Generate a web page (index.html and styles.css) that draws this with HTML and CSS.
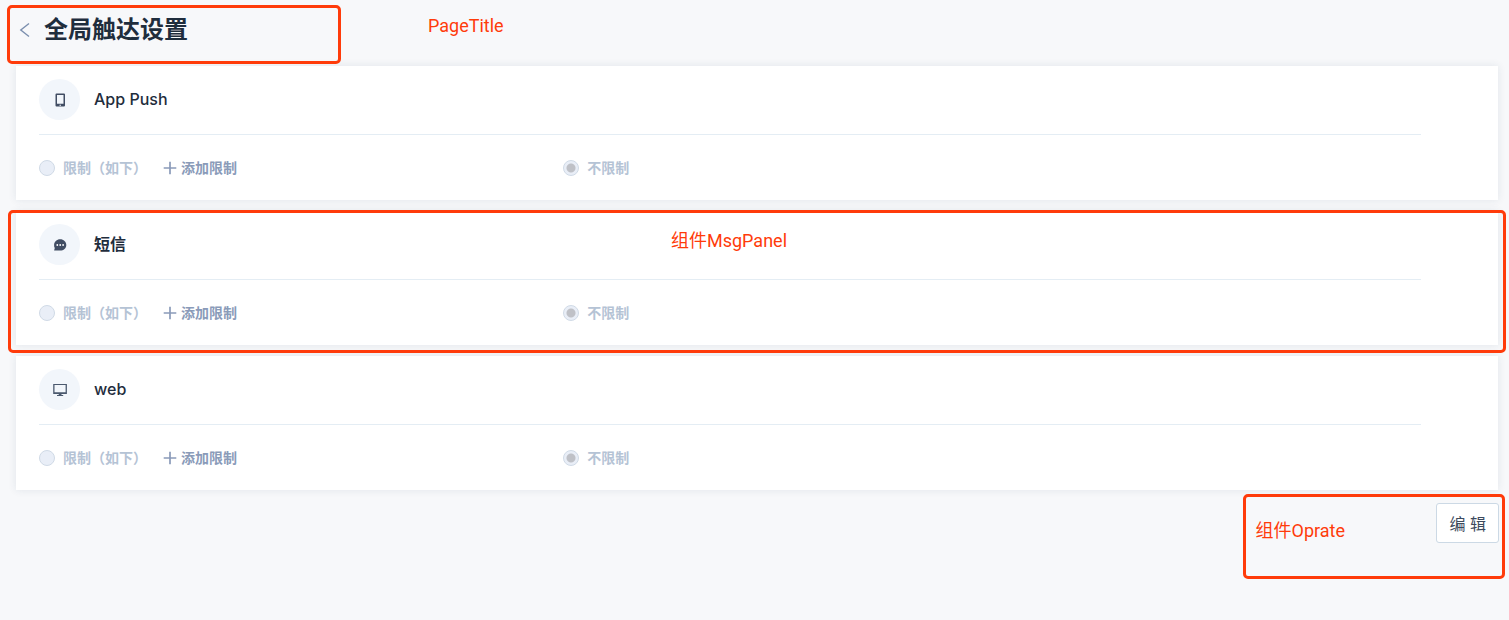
FILE: index.html
```html
<!DOCTYPE html>
<html lang="zh-CN">
<head>
<meta charset="utf-8">
<title>全局触达设置</title>
<link rel="stylesheet" href="styles.css">
</head>
<body>
<header class="page-title">
  <button class="back" type="button" aria-label="返回">
    <svg width="12" height="16" viewBox="0 0 12 16" fill="none" stroke="#7b8fae" stroke-width="1.4"><path d="M11 1.500 2.800 8l8.200 6.500"/></svg>
  </button>
  <h1>全局触达设置</h1>
  <div class="frame frame-title"></div>
  <span class="note note-title">PageTitle</span>
</header>
<main class="panels">
  <section class="panel">
    <div class="panel-head">
      <span class="badge"><svg width="12" height="14" viewBox="0 0 12 14"><path fill="#414d63" fill-rule="evenodd" d="M2.500.5h7.500A1 1 0 0 1 11 1.500v11a1 1 0 0 1-1 1h-7.500a1 1 0 0 1-1-1v-11a1 1 0 0 1 1-1zM3 2v8.800h6.500V2zM5.500 11.700v1h1.500v-1z"/></svg></span>
      <h2>App Push</h2>
    </div>
    <div class="options">
      <div class="option">
        <label class="choice"><input type="radio" name="push" disabled>限制（如下）</label>
        <button class="add" type="button"><svg width="14" height="14" viewBox="0 0 14 14" stroke="#8a9bb9" stroke-width="1.700"><path d="M7 .7v12.600M.7 7h12.600"/></svg>添加限制</button>
      </div>
      <div class="option"><label class="choice"><input type="radio" name="push" checked disabled>不限制</label></div>
    </div>
  </section>
  <section class="panel">
    <div class="panel-head">
      <span class="badge"><svg width="14" height="14" viewBox="0 0 14 14"><path fill="#414d63" d="M7.200 1.200c3.400 0 6.100 2.500 6.100 5.700s-2.700 5.700-6.100 5.700H1.100l.7-2.500A5.400 5.400 0 0 1 1.100 6.900c0-3.200 2.700-5.700 6.100-5.700z"/><g fill="#fff"><circle cx="4.300" cy="7" r=".9"/><circle cx="7.200" cy="7" r=".9"/><circle cx="10.100" cy="7" r=".9"/></g></svg></span>
      <h2 class="cjk">短信</h2>
    </div>
    <div class="options">
      <div class="option">
        <label class="choice"><input type="radio" name="sms" disabled>限制（如下）</label>
        <button class="add" type="button"><svg width="14" height="14" viewBox="0 0 14 14" stroke="#8a9bb9" stroke-width="1.700"><path d="M7 .7v12.600M.7 7h12.600"/></svg>添加限制</button>
      </div>
      <div class="option"><label class="choice"><input type="radio" name="sms" checked disabled>不限制</label></div>
    </div>
    <div class="frame frame-panel"></div>
    <span class="note note-panel">组件MsgPanel</span>
  </section>
  <section class="panel">
    <div class="panel-head">
      <span class="badge"><svg width="14" height="14" viewBox="0 0 14 14"><path fill="#4b596e" fill-rule="evenodd" d="M.2 1h13.700v10H8.500v1.100h1.700V13H4v-.9h1.700V11H.2zM1.500 2v7.300h11.100V2z"/></svg></span>
      <h2>web</h2>
    </div>
    <div class="options">
      <div class="option">
        <label class="choice"><input type="radio" name="web" disabled>限制（如下）</label>
        <button class="add" type="button"><svg width="14" height="14" viewBox="0 0 14 14" stroke="#8a9bb9" stroke-width="1.700"><path d="M7 .7v12.600M.7 7h12.600"/></svg>添加限制</button>
      </div>
      <div class="option"><label class="choice"><input type="radio" name="web" checked disabled>不限制</label></div>
    </div>
  </section>
</main>
<footer class="operate">
  <button class="edit" type="button">编 辑</button>
  <div class="frame frame-operate"></div>
  <span class="note note-operate">组件Oprate</span>
</footer>
</body>
</html>
```

FILE: styles.css
```css
* {
  box-sizing: border-box;
}

body {
  margin: 0;
  background: #f7f8fa;
  color: #1f2d3d;
  font-family: Inter, "Noto Sans CJK SC", sans-serif;
}

button {
  font-family: inherit;
  cursor: pointer;
}

svg {
  display: block;
}

.page-title {
  position: relative;
  display: flex;
  align-items: flex-start;
  gap: 14px;
  padding: 12px 18px 18px;
}

.back {
  display: flex;
  align-items: center;
  height: 36px;
  padding: 0;
  border: 0;
  background: none;
}

h1 {
  margin: 0;
  font-size: 24px;
  font-weight: 600;
  line-height: 36px;
}

.panels {
  display: flex;
  flex-direction: column;
  gap: 11px;
  padding: 0 11px 0 16px;
}

.panel {
  position: relative;
  padding: 13px 77px 0 23px;
  background: #fff;
  box-shadow: 0 0 8px rgba(31, 60, 90, 0.1);
}

.panel-head {
  display: flex;
  align-items: center;
  gap: 14px;
  padding-bottom: 14px;
  border-bottom: 1px solid #e4edf4;
}

.badge {
  display: flex;
  align-items: center;
  justify-content: center;
  width: 41px;
  height: 41px;
  border-radius: 50%;
  background: #f2f6fb;
}

h2 {
  margin: 0;
  padding-bottom: 2px;
  font-size: 16px;
  font-weight: 500;
  line-height: 24px;
}

h2.cjk {
  font-weight: 600;
}

.options {
  display: grid;
  grid-template-columns: 11fr 18fr;
  align-items: center;
  height: 65px;
}

.option,
.choice {
  display: flex;
  align-items: center;
}

.option {
  gap: 16px;
}

.choice {
  gap: 8px;
  color: #b5c3d5;
  font-size: 14px;
  font-weight: 600;
  line-height: 20px;
}

.choice input {
  appearance: none;
  width: 16px;
  height: 16px;
  margin: 0;
  border: 1px solid #d0dae6;
  border-radius: 50%;
  background: #e9eef7;
}

.choice input:checked {
  background: radial-gradient(circle, #bfc1c7 0 4px, #e9eef7 5px);
}

.add {
  display: flex;
  align-items: center;
  gap: 4px;
  padding: 0;
  border: 0;
  background: none;
  color: #8a9bb9;
  font-size: 14px;
  font-weight: 600;
  line-height: 20px;
}

.operate {
  position: relative;
  display: flex;
  justify-content: flex-end;
  padding: 13px 10px 36px;
}

.edit {
  height: 40px;
  padding: 0 12px;
  border: 1px solid #ccd9e5;
  border-radius: 3px;
  background: #fff;
  color: #3c4a5d;
  font-size: 16px;
}

.frame {
  position: absolute;
  z-index: 1;
  border: 3px solid #ff3b0a;
  border-radius: 5px;
  pointer-events: none;
}

.note {
  position: absolute;
  z-index: 1;
  color: #ff3b0a;
  font-family: Roboto, "Noto Sans CJK SC", sans-serif;
  font-size: 18px;
  line-height: 24px;
  white-space: nowrap;
}

.frame-title {
  top: 5px;
  bottom: 2px;
  left: 7px;
  width: 334px;
}

.note-title {
  top: 14px;
  left: 428px;
}

.frame-panel {
  top: -1px;
  right: -8px;
  bottom: -8px;
  left: -8px;
}

.note-panel {
  top: 18px;
  left: 655px;
}

.frame-operate {
  top: 4px;
  right: 4px;
  width: 262px;
  height: 85px;
}

.note-operate {
  top: 29px;
  right: 164px;
}
```
